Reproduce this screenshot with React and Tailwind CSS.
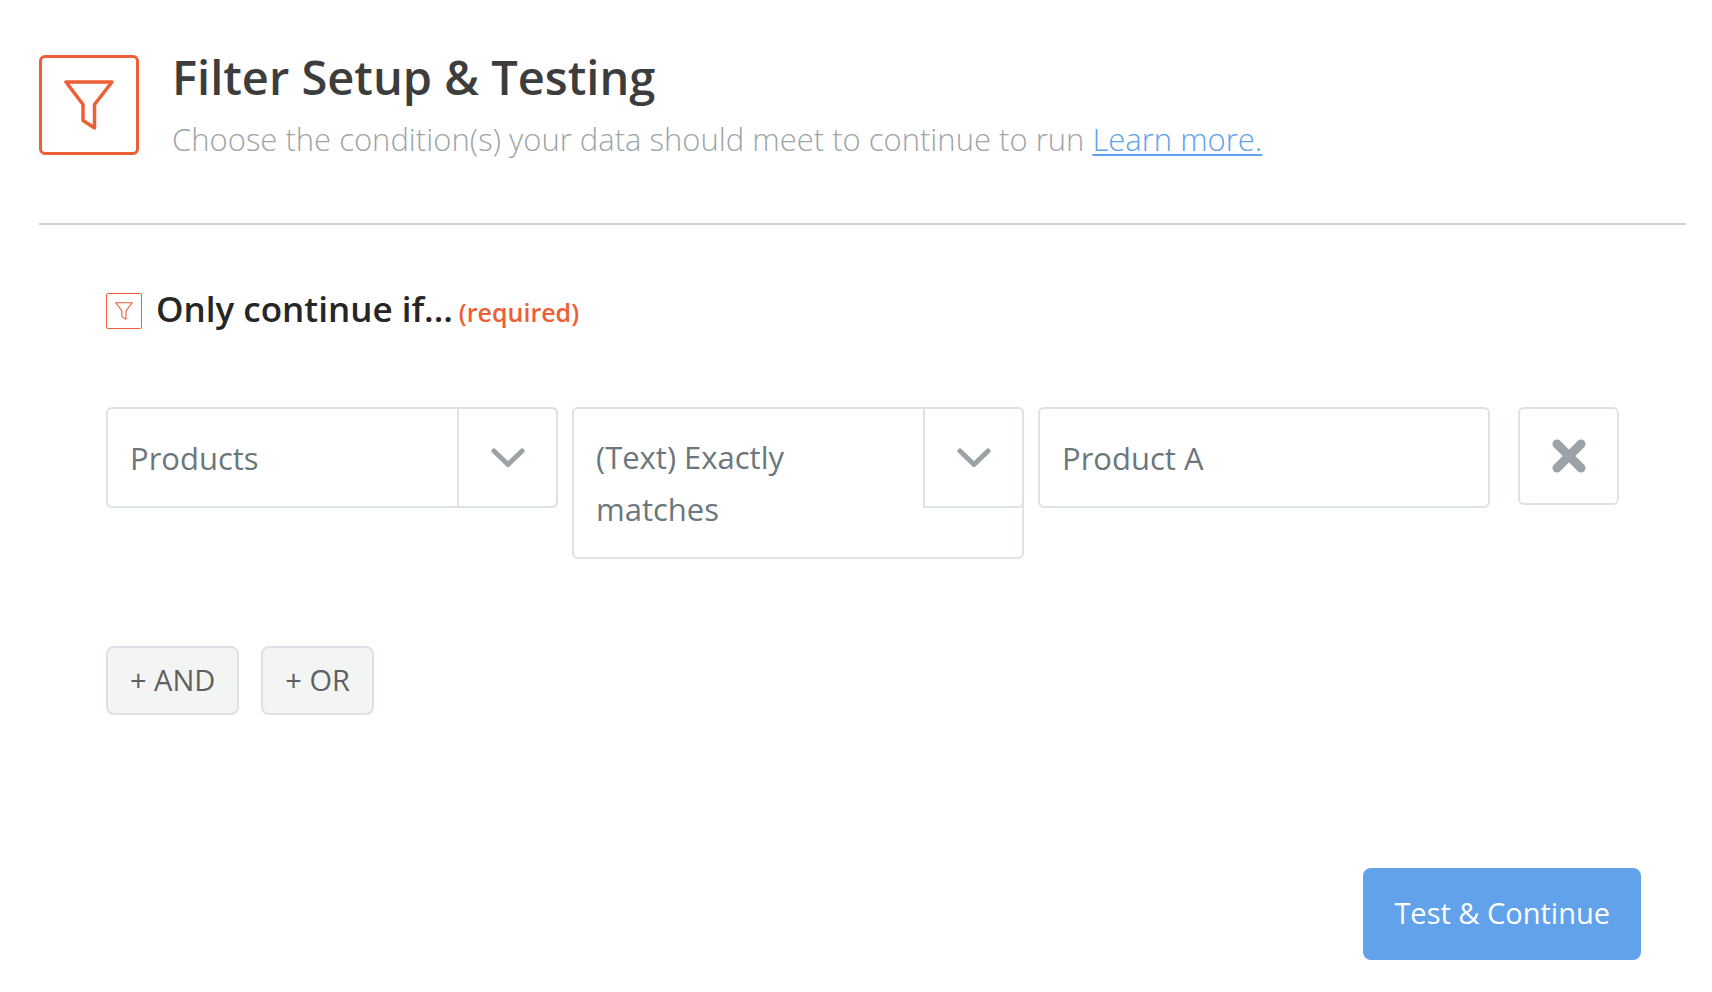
import React, { useState } from 'react';

const FunnelIcon = ({ className, strokeWidth }) => (
  <svg
    viewBox="0 0 50 50"
    fill="none"
    stroke="currentColor"
    strokeWidth={strokeWidth}
    strokeLinejoin="round"
    className={className}
    aria-hidden="true"
  >
    <path d="M2 2h46L30.500 24.500V48L19 40.500V24.500z" />
  </svg>
);

const SelectField = ({ label, value, onChange, options, className }) => (
  <div className="grid min-w-0 items-start">
    <select
      aria-label={label}
      value={value}
      onChange={onChange}
      className={`col-start-1 row-start-1 w-full appearance-none whitespace-normal rounded-md border-2 border-[#dde2e5] bg-white pl-[22px] pr-[120px] text-[31px] leading-[52px] text-[#6b777c] ${className}`}
    >
      {options.map(option => (
        <option key={option} value={option}>{option}</option>
      ))}
    </select>
    <div className="pointer-events-none col-start-1 row-start-1 flex h-[101px] w-[101px] items-center justify-center justify-self-end rounded-r-md border-2 border-[#dde2e5] text-[#9ca3a7]">
      <svg viewBox="0 0 34 20" fill="none" stroke="currentColor" strokeWidth="5" strokeLinecap="round" strokeLinejoin="round" className="h-5 w-[34px]" aria-hidden="true">
        <path d="M3 3l14 13.500L31 3" />
      </svg>
    </div>
  </div>
);

const App = () => {
  const [field, setField] = useState('Products');
  const [condition, setCondition] = useState('(Text) Exactly matches');
  const [value, setValue] = useState('Product A');

  return (
    <main className="bg-white pb-[34px] pl-[39px] pr-[26px] pt-[55px] font-['Open_Sans',sans-serif]">
      {/* Header */}
      <header className="flex items-start gap-[33px] border-b-2 border-[#cfd0d1] pb-[66px]">
        <div className="flex h-[100px] w-[100px] shrink-0 items-center justify-center rounded-md border-3 border-[#ed5f36] text-[#ed5f36]">
          <FunnelIcon className="h-[50px] w-[50px]" strokeWidth="3.500" />
        </div>
        <div>
          <h1 className="text-[47px] font-semibold leading-[44px] text-[#3d3d3d]">Filter Setup &amp; Testing</h1>
          <p className="mt-[22px] text-[31px] font-light leading-9 text-[#9da5a9]">
            Choose the condition(s) your data should meet to continue to run{' '}
            <a href="#learn-more" className="text-[#60a2ec] underline decoration-2 underline-offset-3">Learn more.</a>
          </p>
        </div>
      </header>

      <form className="px-[67px] pt-16" onSubmit={e => e.preventDefault()}>
        {/* Rule title */}
        <div className="flex items-center gap-[14px]">
          <div className="flex h-9 w-9 shrink-0 items-center justify-center rounded-xs border border-[#ed5f36] text-[#ed5f36]">
            <FunnelIcon className="h-[18px] w-[18px]" strokeWidth="3" />
          </div>
          <h2 className="flex items-baseline gap-[6px] text-[35px] font-semibold leading-[40px] text-[#262626]">
            Only continue if...
            <span className="text-[25px] text-[#ed5f36]">(required)</span>
          </h2>
        </div>

        {/* Condition row */}
        <div className="mt-[75px] grid grid-cols-[repeat(3,minmax(0,1fr))_auto] items-start gap-[14px]">
          <SelectField
            label="Field"
            value={field}
            onChange={e => setField(e.target.value)}
            options={['Products']}
            className="h-[101px]"
          />
          <SelectField
            label="Condition"
            value={condition}
            onChange={e => setCondition(e.target.value)}
            options={['(Text) Exactly matches']}
            className="h-[152px]"
          />
          <input
            type="text"
            aria-label="Value"
            value={value}
            onChange={e => setValue(e.target.value)}
            className="h-[101px] w-full rounded-md border-2 border-[#dde2e5] px-[22px] text-[31px] text-[#6b777c]"
          />
          <button type="button" aria-label="Remove condition" className="ml-[14px] flex h-[98px] w-[101px] items-center justify-center rounded-md border-2 border-[#dde2e5] text-[#9ca3a7]">
            <svg viewBox="0 0 36 36" fill="none" stroke="currentColor" strokeWidth="9" strokeLinecap="round" className="h-9 w-9" aria-hidden="true">
              <path d="M6 6l24 24M30 6L6 30" />
            </svg>
          </button>
        </div>

        <div className="mt-[87px] flex gap-[22px]">
          <button type="button" className="h-[69px] rounded-lg border-2 border-[#dde0e4] bg-[#f3f5f4] px-[22px] pb-0.5 text-[29px] text-[#606060]">+ AND</button>
          <button type="button" className="h-[69px] rounded-lg border-2 border-[#dde0e4] bg-[#f3f5f4] px-[22px] pb-0.5 text-[29px] text-[#606060]">+ OR</button>
        </div>
      </form>

      {/* Footer */}
      <div className="mt-[153px] flex justify-end pr-[45px]">
        <button type="button" className="h-[92px] rounded-lg bg-[#62a2eb] px-[31px] pb-0.5 text-[29px] text-white">Test &amp; Continue</button>
      </div>
    </main>
  );
};

export default App;
